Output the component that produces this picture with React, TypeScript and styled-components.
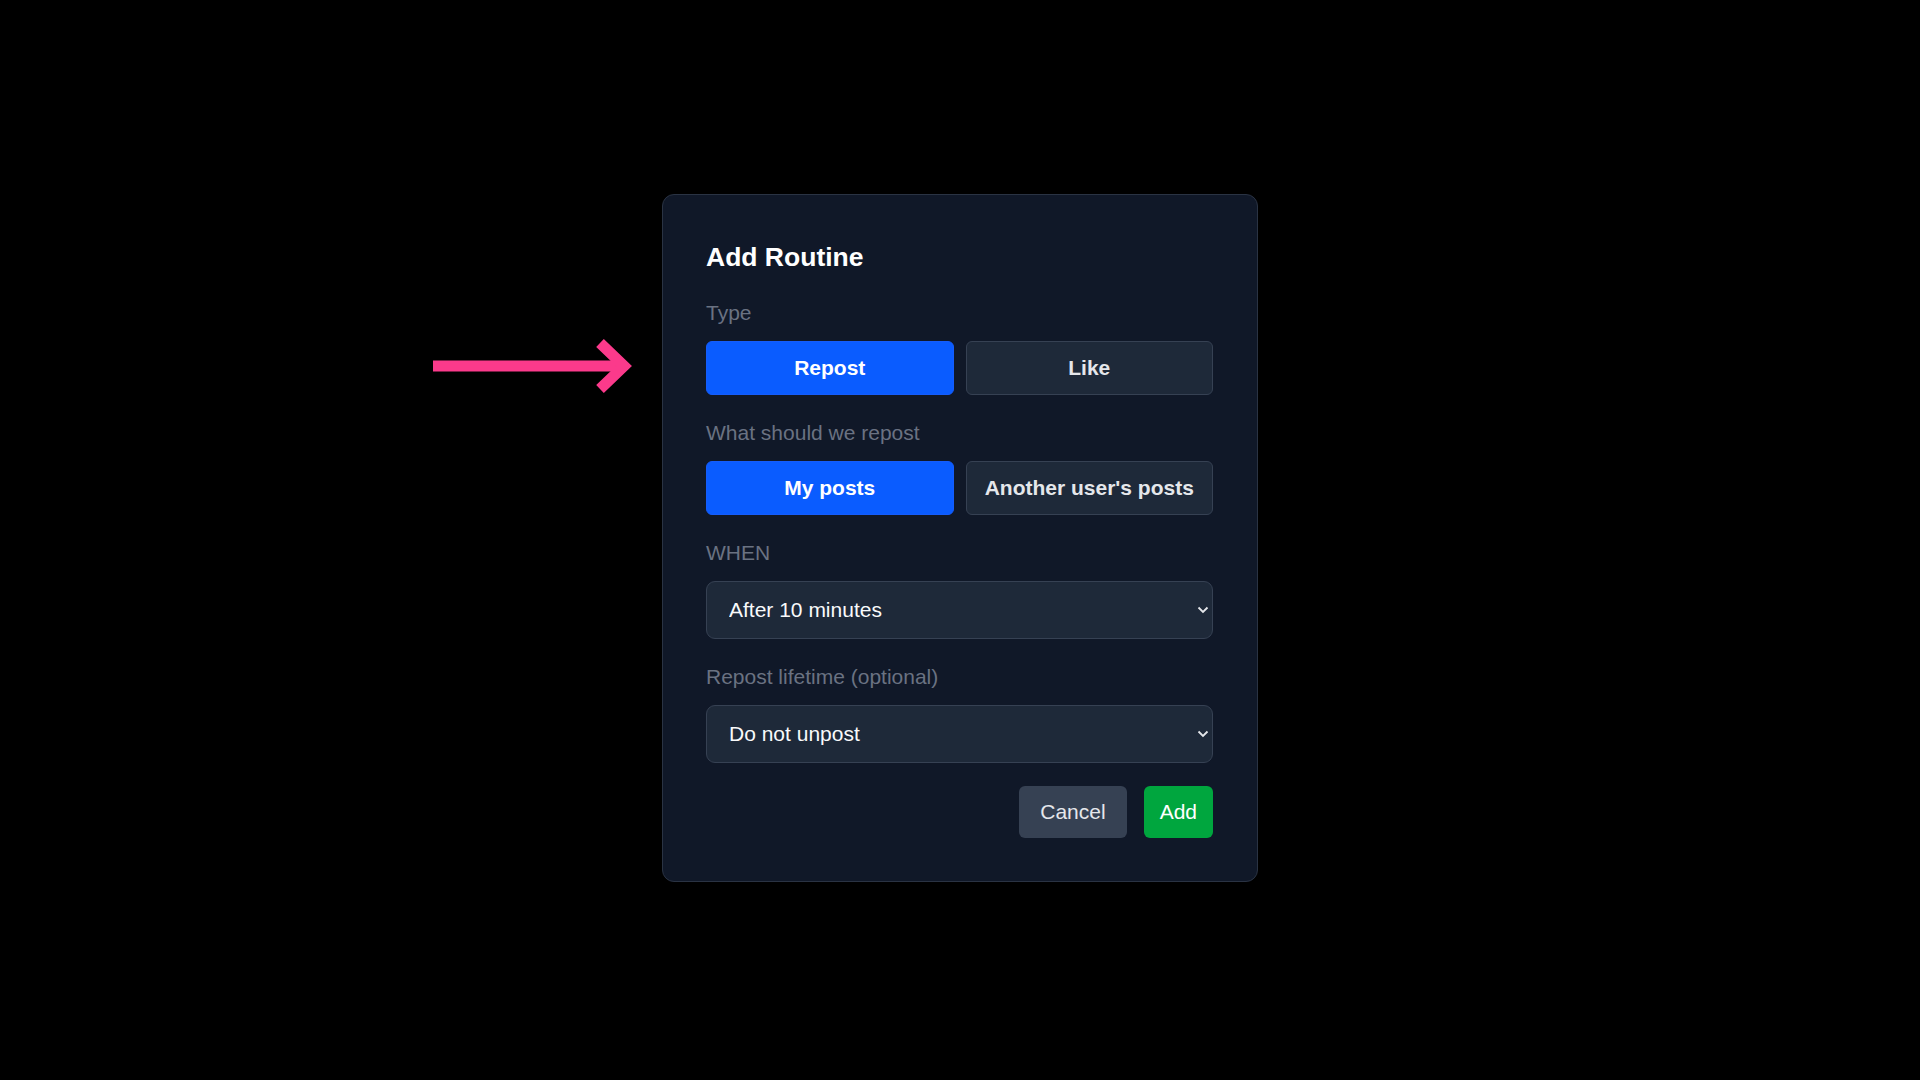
import React from 'react';
import styled, { createGlobalStyle } from 'styled-components';

const GlobalStyle = createGlobalStyle`
html, body {
    margin: 0;
    padding: 0;
    background: #000000;
}
body {
    font-family: "Liberation Sans", Arial, sans-serif;
}
* {
    box-sizing: border-box;
}
`

const Page = styled.div`
width: 100vw;
height: 100vh;
display: flex;
align-items: center;
justify-content: center;
padding-bottom: 5px;
background: #000000;
`

const Modal = styled.div`
position: relative;
width: 596px;
padding: 44px 44px 43px 43px;
background: #101828;
border: 1.5px solid #2a3343;
border-radius: 12px;
`

const Pointer = styled.svg`
position: absolute;
left: -230px;
top: 141px;
width: 200px;
height: 60px;
`

const Title = styled.h2`
margin: 0 0 23px;
font-size: 26.5px;
line-height: 36px;
font-weight: 700;
color: #ffffff;
`

const Field = styled.div<{ $last?: boolean }>`
margin-bottom: ${p => (p.$last ? '0' : '23px')};
`

const Label = styled.div`
margin-bottom: 13px;
font-size: 21px;
line-height: 30px;
color: #6a7282;
`

const Toggle = styled.div`
display: grid;
grid-template-columns: 1fr 1fr;
gap: 12px;
`

const ToggleButton = styled.button<{ $active?: boolean }>`
height: 54px;
border-radius: 6px;
border: 1.5px solid ${p => (p.$active ? '#155dfc' : '#364153')};
background: ${p => (p.$active ? '#0a5cff' : '#1e2939')};
color: ${p => (p.$active ? '#ffffff' : '#e5e7eb')};
font-family: inherit;
font-size: 21px;
font-weight: 700;
cursor: pointer;
`

const SelectWrap = styled.div`
position: relative;
`

const Select = styled.select`
appearance: none;
width: 100%;
height: 58px;
padding: 0 48px 0 22px;
border: 1.5px solid #364153;
border-radius: 9px;
background: #1e2939;
color: #f9fafb;
font-family: inherit;
font-size: 21px;
outline: none;
`

const Chevron = styled.svg`
position: absolute;
right: 4px;
top: 25px;
width: 12px;
height: 8px;
pointer-events: none;
`

const Footer = styled.div`
display: flex;
justify-content: flex-end;
gap: 17px;
margin-top: 23px;
`

const ActionButton = styled.button<{ $primary?: boolean }>`
height: 52px;
padding: 0 ${p => (p.$primary ? '16px' : '21px')};
border: none;
border-radius: 6px;
background: ${p => (p.$primary ? '#00a63e' : '#364153')};
color: ${p => (p.$primary ? '#ffffff' : '#e5e7eb')};
font-family: inherit;
font-size: 21px;
cursor: pointer;
`

const ChevronIcon = () => (
    <Chevron viewBox="0 0 12 8">
        <polyline points="1.5,1.5 6,6 10.5,1.5" fill="none" stroke="#e5e7eb" strokeWidth="1.8" />
    </Chevron>
)

const App = () => {
    return (
        <>
            <GlobalStyle />
            <Page>
                <Modal>
                    <Pointer viewBox="0 0 200 60">
                        <line x1="0" y1="30" x2="188" y2="30" stroke="#fb3a8b" strokeWidth="11" />
                        <polyline points="167,7 191,30 167,53" fill="none" stroke="#fb3a8b" strokeWidth="11" strokeLinejoin="miter" />
                    </Pointer>
                    <Title>Add Routine</Title>

                    <Field>
                        <Label>Type</Label>
                        <Toggle>
                            <ToggleButton $active>Repost</ToggleButton>
                            <ToggleButton>Like</ToggleButton>
                        </Toggle>
                    </Field>

                    <Field>
                        <Label>What should we repost</Label>
                        <Toggle>
                            <ToggleButton $active>My posts</ToggleButton>
                            <ToggleButton>Another user's posts</ToggleButton>
                        </Toggle>
                    </Field>

                    <Field>
                        <Label>WHEN</Label>
                        <SelectWrap>
                            <Select defaultValue="10">
                                <option value="10">After 10 minutes</option>
                            </Select>
                            <ChevronIcon />
                        </SelectWrap>
                    </Field>

                    <Field $last>
                        <Label>Repost lifetime (optional)</Label>
                        <SelectWrap>
                            <Select defaultValue="never">
                                <option value="never">Do not unpost</option>
                            </Select>
                            <ChevronIcon />
                        </SelectWrap>
                    </Field>

                    <Footer>
                        <ActionButton>Cancel</ActionButton>
                        <ActionButton $primary>Add</ActionButton>
                    </Footer>
                </Modal>
            </Page>
        </>
    )
}

export default App
